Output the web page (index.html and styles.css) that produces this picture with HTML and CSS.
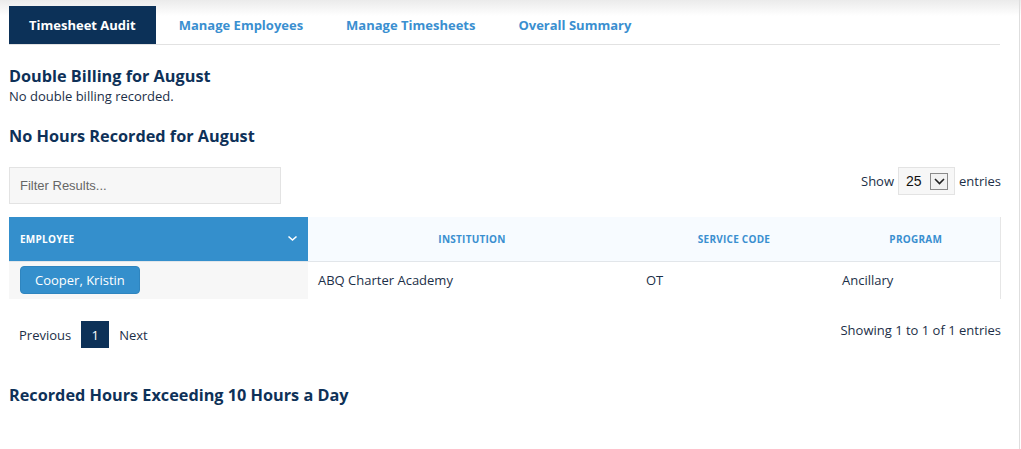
FILE: index.html
```html
<!DOCTYPE html>
<html lang="en">
<head>
<meta charset="utf-8">
<title>Timesheet Audit</title>
<link rel="stylesheet" href="styles.css">
</head>
<body>
<div class="page">
  <nav class="tabs">
    <a class="tab active">Timesheet Audit</a>
    <a class="tab">Manage Employees</a>
    <a class="tab">Manage Timesheets</a>
    <a class="tab">Overall Summary</a>
  </nav>

  <section class="section first">
    <h2 class="heading">Double Billing for August</h2>
    <p class="note">No double billing recorded.</p>
  </section>

  <section class="section">
    <h2 class="heading">No Hours Recorded for August</h2>
    <div class="controls">
      <input class="filter" type="text" placeholder="Filter Results...">
      <div class="length">
        <span>Show</span>
        <div class="select">
          <span class="select-value">25</span>
          <span class="select-btn">
            <svg width="11" height="7" viewBox="0 0 11 7"><path d="M1 1l4.5 4.5L10 1" fill="none" stroke="#222" stroke-width="1.6"/></svg>
          </span>
        </div>
        <span>entries</span>
      </div>
    </div>

    <table class="grid">
      <colgroup>
        <col class="c-emp"><col class="c-inst"><col class="c-code"><col class="c-prog">
      </colgroup>
      <thead>
        <tr>
          <th class="sorted">
            <div class="th-inner">
              <span>Employee</span>
              <svg width="11" height="7" viewBox="0 0 11 7"><path d="M1.5 1.5l4 3.5 4-3.5" fill="none" stroke="#fff" stroke-width="1.6"/></svg>
            </div>
          </th>
          <th>Institution</th>
          <th>Service Code</th>
          <th>Program</th>
        </tr>
      </thead>
      <tbody>
        <tr>
          <td class="emp"><button class="emp-btn" type="button">Cooper, Kristin</button></td>
          <td>ABQ Charter Academy</td>
          <td>OT</td>
          <td>Ancillary</td>
        </tr>
      </tbody>
    </table>

    <div class="footer">
      <div class="pager">
        <span class="pg">Previous</span>
        <span class="pg current">1</span>
        <span class="pg">Next</span>
      </div>
      <div class="info">Showing 1 to 1 of 1 entries</div>
    </div>
  </section>

  <section class="section last">
    <h2 class="heading">Recorded Hours Exceeding 10 Hours a Day</h2>
  </section>
</div>
</body>
</html>
```

FILE: styles.css
```css
* { box-sizing: border-box; }

html, body {
  margin: 0;
  height: 100%;
}

body {
  font-family: "Open Sans", "DejaVu Sans", sans-serif;
  color: #1c2f48;
  background: linear-gradient(#ebebeb 0, #ffffff 16px);
  overflow: hidden;
}

.page {
  width: 1020px;
  min-height: 100%;
  padding: 6px 18px 0 9px;
  border-right: 1px solid #dedede;
}

.tabs {
  display: flex;
  gap: 3px;
  width: 991px;
  height: 39px;
  border-bottom: 1px solid #e2e2e2;
}

.tab {
  display: flex;
  align-items: center;
  height: 38px;
  padding: 0 20px;
  font-size: 13px;
  font-weight: 700;
  color: #3a8fd0;
}

.tab.active {
  background: #0c3158;
  color: #ffffff;
}

.section.first { margin-top: 20px; }
.section { margin-top: 20px; }
.section.last { margin-top: 36px; }

.heading {
  margin: 0;
  font-size: 16.25px;
  line-height: 22px;
  font-weight: 700;
  color: #0e3158;
}

.note {
  margin: 0;
  font-size: 13px;
  line-height: 18px;
  color: #1c2f48;
}

.controls {
  display: flex;
  justify-content: space-between;
  align-items: flex-start;
  margin-top: 20px;
}

.filter {
  width: 272px;
  height: 37px;
  margin: 0;
  padding: 0 0 0 10px;
  background: #f7f7f7;
  border: 1px solid #e3e3e3;
  font-family: "Liberation Sans", Arial, sans-serif;
  font-size: 13px;
  color: #333;
  outline: none;
}

.filter::placeholder { color: #666666; }

.length {
  display: flex;
  align-items: center;
  gap: 4px;
  font-size: 13px;
  color: #1c2f48;
}

.select {
  display: flex;
  align-items: center;
  width: 57px;
  height: 28px;
  padding: 0 6px 0 7px;
  background: #f7f7f7;
  border: 1px solid #e3e3e3;
  font-family: "Liberation Sans", Arial, sans-serif;
  font-size: 14px;
  color: #111;
}

.select-value { flex: 1; }

.select-btn {
  display: flex;
  align-items: center;
  justify-content: center;
  width: 18px;
  height: 17px;
  border: 1px solid #8a8a8a;
  background: #f2f2f2;
}

.grid {
  width: 991px;
  margin-top: 13px;
  border-collapse: collapse;
  table-layout: fixed;
  border-right: 1px solid #e6e6e6;
}

.c-emp { width: 299px; }
.c-inst { width: 328px; }
.c-code { width: 196px; }
.c-prog { width: 168px; }

.grid th {
  height: 44px;
  padding: 0;
  background: #f7fbff;
  border-bottom: 1px solid #e2e6ea;
  font-size: 10px;
  font-weight: 700;
  letter-spacing: 0.25px;
  text-transform: uppercase;
  color: #3a8fd0;
  text-align: center;
}

.grid th.sorted {
  background: #348fcc;
  color: #ffffff;
  text-align: left;
}

.th-inner {
  display: flex;
  align-items: center;
  justify-content: space-between;
  padding: 0 10px 0 11px;
}

.grid td {
  height: 38px;
  padding: 0 10px;
  font-size: 13px;
  color: #1c2f48;
  vertical-align: middle;
}

.grid td.emp {
  padding-left: 11px;
  background: #f7f7f7;
}

.emp-btn {
  height: 28px;
  padding: 0 14px;
  border: 1px solid #2f85bf;
  border-radius: 4px;
  background: #348fcc;
  color: #ffffff;
  font-family: "Open Sans", sans-serif;
  font-size: 13px;
  cursor: pointer;
  vertical-align: middle;
}

.footer {
  display: flex;
  justify-content: space-between;
  align-items: flex-start;
  width: 992px;
  margin-top: 22px;
}

.pager {
  display: flex;
  align-items: center;
  gap: 10px;
  padding-left: 10px;
}

.pg {
  font-size: 13px;
  color: #1c2f48;
}

.pg.current {
  display: flex;
  align-items: center;
  justify-content: center;
  width: 28px;
  height: 27px;
  background: #0c3158;
  color: #ffffff;
}

.info {
  font-size: 13px;
  line-height: 18px;
  color: #1c2f48;
}
```
